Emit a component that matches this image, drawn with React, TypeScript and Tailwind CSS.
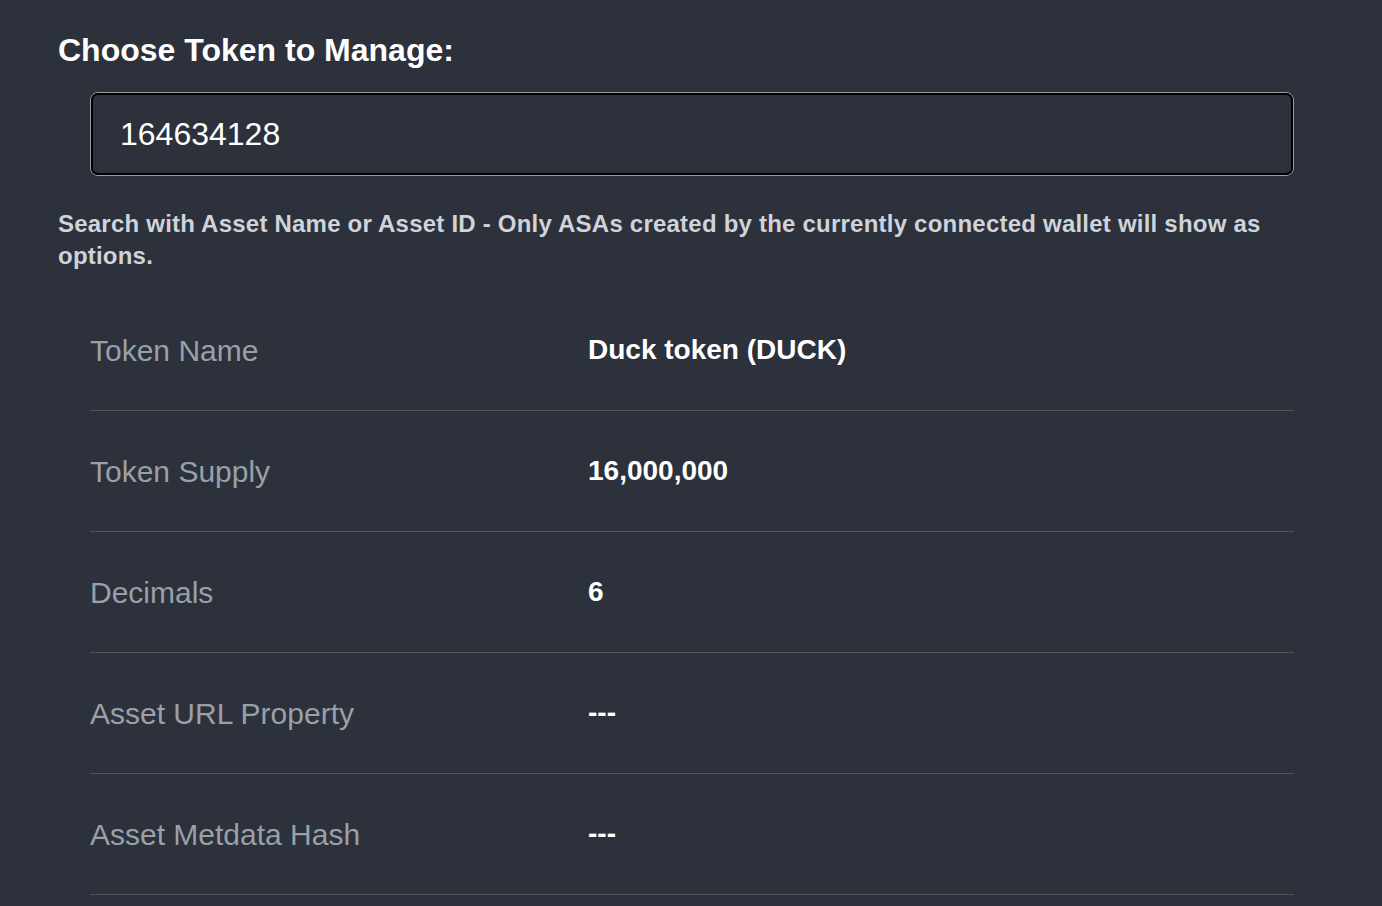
const rows = [
  { label: 'Token Name', value: 'Duck token (DUCK)' },
  { label: 'Token Supply', value: '16,000,000' },
  { label: 'Decimals', value: '6' },
  { label: 'Asset URL Property', value: '---' },
  { label: 'Asset Metdata Hash', value: '---' },
];

export default function App() {
  return (
    <div className="min-h-screen w-full bg-[#2c313b] font-['Liberation_Sans',Arial,sans-serif] overflow-hidden">
      <div className="pl-[58px] pr-[88px] pt-[30px]">
        <h2 className="text-[32px] leading-[40px] font-bold text-white">Choose Token to Manage:</h2>

        <div className="mt-[22px] ml-[32px]">
          <div className="h-[84px] rounded-[8px] border border-[#999ca1]">
            <div className="h-full rounded-[7px] border-2 border-black flex items-center pl-[27px]">
              <span className="text-[32px] text-white">164634128</span>
            </div>
          </div>
        </div>

        <p className="mt-[32px] text-[24px] leading-[32px] font-bold text-[#cfd3da] tracking-[0.22px]">
          Search with Asset Name or Asset ID - Only ASAs created by the currently connected wallet will show as options.
        </p>

        <div className="mt-[18px] ml-[32px]">
          {rows.map((r) => (
            <div key={r.label} className="flex items-center h-[121px] border-b border-[#50555e]">
              <div className="w-[498px] text-[30px] text-[#9aa0a9]">{r.label}</div>
              <div className="text-[28px] font-bold text-white">{r.value}</div>
            </div>
          ))}
        </div>
      </div>
    </div>
  );
}
